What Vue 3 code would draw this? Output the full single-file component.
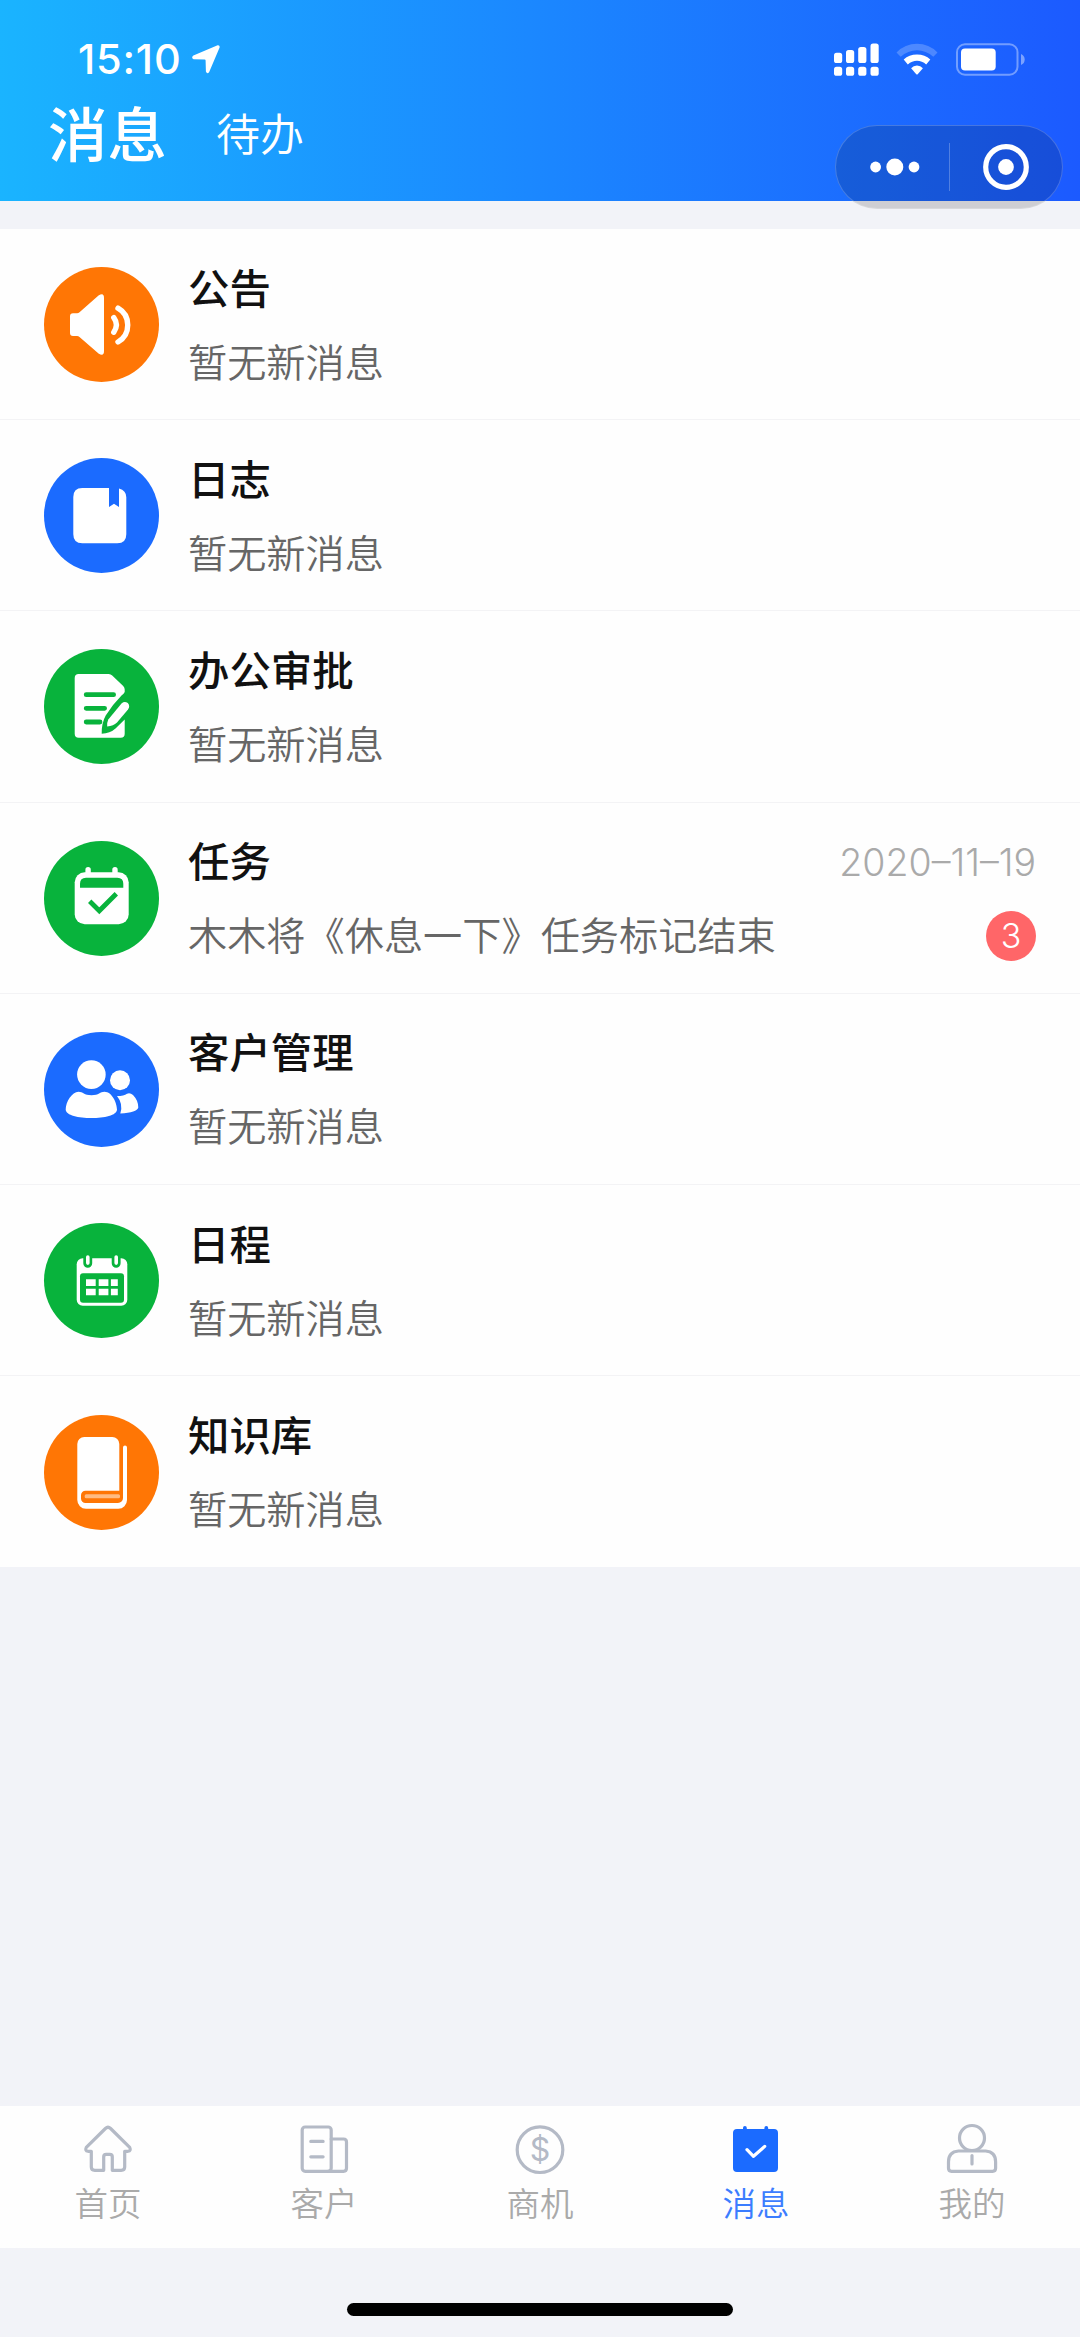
<template>
  <div class="page">
    <!-- Header -->
    <header class="header">
      <div class="status-bar">
        <div class="status-left">
          <span class="time">15:10</span>
          <svg class="icon-location" viewBox="0 0 28 29">
            <path d="M25.6.3 1.4 10.6Q-1.2 12.8 1.6 14.2L12.6 14.4Q13.6 14.5 13.6 15.5L13.9 26.5Q15.2 29.6 17.2 27L27.6 2.5Q28 0 25.6.3z" fill="#fff" />
          </svg>
        </div>
        <div class="status-right">
          <svg class="icon-signal" viewBox="0 0 45 33" fill="#fff">
            <rect x="0" y="9.7" width="8.2" height="10.3" rx="2.6" />
            <rect x="12" y="7" width="8.2" height="13" rx="2.6" />
            <rect x="24.2" y="4" width="8.2" height="16" rx="2.6" />
            <rect x="36.5" y="0.4" width="8.2" height="19.6" rx="2.6" />
            <rect v-for="x in [0, 12, 24.2, 36.5]" :key="x" :x="x" y="23.8" width="8.2" height="9" rx="2.6" />
          </svg>
          <svg class="icon-wifi" viewBox="0 0 42 33">
            <path d="M0.5 9.4Q9 .7 21 .7T41.5 9.4L37.3 13.7Q30 7.2 21 7.2T4.7 13.7z" fill="#fff" fill-opacity="0.22" />
            <path d="M7.7 16.6Q13 11.5 21 11.5T34.3 16.6L30.2 21.5Q26 17.8 21 17.8T11.8 21.5z" fill="#fff" />
            <path d="M15.1 25.2Q17.5 22.4 21 22.4T26.9 25.2L21.7 31.2Q21 31.8 20.3 31.2z" fill="#fff" />
          </svg>
          <svg class="icon-battery" viewBox="0 0 69 33">
            <rect x="1" y="1.3" width="60.5" height="30.4" rx="8" fill="none" stroke="#fff" stroke-opacity="0.38" stroke-width="2" />
            <rect x="5" y="5.5" width="34.7" height="22" rx="4" fill="#fff" />
            <path d="M65 11Q68.7 12.5 68.7 16.5T65 22z" fill="#fff" fill-opacity="0.42" />
          </svg>
        </div>
      </div>
      <nav class="top-tabs">
        <span class="top-tab active">消息</span>
        <span class="top-tab">待办</span>
      </nav>
    </header>

    <!-- Mini program capsule -->
    <div class="capsule">
      <div class="capsule-half">
        <svg class="icon-more" viewBox="0 0 50 18" fill="#fff">
          <circle cx="5.6" cy="9" r="5.4" />
          <circle cx="24.8" cy="9" r="8.5" />
          <circle cx="44" cy="9" r="5.4" />
        </svg>
      </div>
      <div class="capsule-line"></div>
      <div class="capsule-half">
        <svg class="icon-close" viewBox="0 0 46 46">
          <circle cx="23" cy="23" r="20.3" fill="none" stroke="#fff" stroke-width="5.2" />
          <circle cx="23" cy="23" r="7.9" fill="#fff" />
        </svg>
      </div>
    </div>

    <!-- Message list -->
    <main class="list">
      <div v-for="item in messages" :key="item.title" class="item">
        <div class="avatar" :class="item.color">
          <svg viewBox="0 0 115 115" fill="#fff">
            <g v-if="item.icon === 'notice'">
              <path d="M29 46.3h4q1.5 0 2.5-1L54.5 28.6Q60 25 60 31V84Q60 90 54.5 86.5L35.5 70q-1-1-2.5-1h-4q-3 0-3-3V49.3q0-3 3-3z" />
              <g fill="none" stroke="#fff" stroke-width="5.4" stroke-linecap="round">
                <path d="M69.8 50.7Q75 57.7 69.8 65.2" />
                <path d="M74 41.2C87 48.5 87 67.5 74 75" />
              </g>
            </g>
            <g v-else-if="item.icon === 'journal'">
              <path d="M38.3 30H65v19l5-3.3 5 3.3V30.5q7.3 2 7.3 8.8v37q0 9-9 9h-35q-9 0-9-9V39q0-9 9-9z" />
            </g>
            <g v-else-if="item.icon === 'approve'">
              <path d="M34.7 25h30q2 0 3.5 1.5l11 10.5q1.5 1.5 1.5 3.5v2.5Q80 44.5 77.5 46.5Q69 55 61.7 66.5Q57.5 74 57.7 84.8Q66 84.5 71.5 79.5L80.7 70.5V84.7q0 4-4 4h-42q-4 0-4-4V29q0-4 4-4z" />
              <path class="cut rounded" d="M42.2 45.7H69.6M42.2 59.3H60.6M42.2 73H56" />
              <path d="M64.3 70.5L77.5 54.5Q80.5 51.8 83.8 54Q86.5 57 84 60.5L73 73.5Q69.5 77 63.2 77.5Q63 73 64.3 70.5z" />
            </g>
            <g v-else-if="item.icon === 'task'">
              <rect x="30.7" y="31.3" width="54" height="52" rx="10" />
              <rect x="41.4" y="26" width="5.4" height="12" rx="2.7" />
              <rect x="68.3" y="26" width="5.4" height="12" rx="2.7" />
              <path d="M36 46.7V42.7q0-6 6-6H73.3q6 0 6 6v4z" fill="#08b33c" />
              <path class="cut" d="M45.7 60.3 55.3 69.8 72.3 52.7" />
            </g>
            <g v-else-if="item.icon === 'customer'">
              <circle cx="47.4" cy="42.6" r="14.3" />
              <circle cx="76" cy="48.3" r="10" />
              <path d="M34.5 59.7C39 59.7 40 63.2 47.5 63.2S56 59.7 60.5 59.7C68 59.7 73 71 73 77.5C73 83.5 60 86 47.5 86S21.7 83.5 21.7 77.5C21.7 70 28 59.7 34.5 59.7z" />
              <path d="M73 64Q80 64 83 61.7Q86 60.3 89 63Q94.3 68.5 94.3 75.5Q93 80.5 76.3 81.5Q79.5 72 73 64z" />
            </g>
            <g v-else-if="item.icon === 'schedule'">
              <rect x="32.7" y="35.3" width="50.6" height="47.4" rx="6" />
              <g fill="#08b33c">
                <rect x="36" y="50.3" width="44" height="29.4" rx="3" />
                <path d="M39.3 34.5H48.2V40.3a4.45 4.45 0 0 1-8.9 0zM67.7 34.5H76.6V40.3a4.45 4.45 0 0 1-8.9 0z" />
              </g>
              <rect x="42" y="32.3" width="3.6" height="9.6" rx="1.8" />
              <rect x="70.4" y="32.3" width="3.6" height="9.6" rx="1.8" />
              <path d="M42 56.2h9.7v6.7H42zM54.7 56.2h9.7v6.7h-9.7zM66.9 56.2h6.9v6.7h-6.9zM42 65.7h9.7v6.5H42zM54.7 65.7h9.7v6.5h-9.7zM66.9 65.7h6.9v6.5h-6.9z" />
            </g>
            <g v-else>
              <path d="M40.3 22H68.3a7 7 0 0 1 7 7V75.7H41.5a4.5 4.5 0 0 0-4.5 4.5v3.3a4.5 4.5 0 0 0 4.5 4.5H74a5 5 0 0 0 5-5V32.5a2 2 0 0 1 4 0V85a8.7 8.7 0 0 1-8.7 8.7H42a8.7 8.7 0 0 1-8.7-8.7V29a7 7 0 0 1 7-7z" />
              <rect x="40.7" y="79.3" width="35.3" height="4" rx="1.5" fill-opacity="0.5" />
            </g>
          </svg>
        </div>
        <div class="content">
          <div class="line">
            <span class="title">{{ item.title }}</span>
            <span v-if="item.date" class="date">{{ item.date }}</span>
          </div>
          <div class="line">
            <span class="desc">{{ item.desc }}</span>
            <span v-if="item.count" class="badge">{{ item.count }}</span>
          </div>
        </div>
      </div>
    </main>

    <!-- Tab bar -->
    <footer class="tab-bar">
      <div
        v-for="tab in tabs"
        :key="tab.label"
        class="tab"
        :class="{ active: tab.icon === activeTab }"
      >
        <svg class="tab-icon" viewBox="0 0 54 54">
          <path v-if="tab.icon === 'home'" d="M24.4 6.5q2.6-2.4 5.2 0L48.7 25.4q1.6 3.3-1.7 3.9h-3.3V45q0 3.3-3.5 3.3h-8.9V34.8q0-2.5-2.5-2.5h-3.6q-2.5 0-2.5 2.5v13.5h-8.9q-3.5 0-3.5-3.3V29.3H7q-3.3-.6-1.7-3.9z" />
          <g v-else-if="tab.icon === 'customer'">
            <rect x="5.2" y="5" width="29" height="44.3" rx="3" />
            <path d="M34.2 17H46.5q3 0 3 3V46.3q0 3-3 3H31M13.800 19.400H26.100M13.800 34.800H26.100" />
          </g>
          <g v-else-if="tab.icon === 'chance'">
            <circle cx="27" cy="27.7" r="22.8" />
            <text class="coin" x="27" y="39" text-anchor="middle">$</text>
          </g>
          <g v-else-if="tab.icon === 'message'">
            <path class="solid" d="M8 7H14V5.900q0-1.900 1.900-1.900T17.800 5.900V7H35.400V5.900q0-1.900 1.900-1.900T39.200 5.900V7H45q4 0 4 4V46q0 4-4 4H8q-4 0-4-4V11q0-4 4-4z" />
            <path class="check" d="M18 27.7 24.5 34.3 35.7 24.4" />
          </g>
          <g v-else>
            <circle cx="27" cy="16" r="12.5" />
            <path d="M13.5 29H40.600q10 .8 10 10.800V46.300q0 3-3 3H6.500q-3 0-3-3V39.800q0-10 10-10.800zM27 33.500V42" />
          </g>
        </svg>
        <span class="tab-label">{{ tab.label }}</span>
      </div>
    </footer>
    <div class="safe-area">
      <div class="home-indicator"></div>
    </div>
  </div>
</template>

<script setup>
import { ref } from 'vue'

const EMPTY = '暂无新消息'

const messages = ref([
  { icon: 'notice', color: 'orange', title: '公告', desc: EMPTY },
  { icon: 'journal', color: 'blue', title: '日志', desc: EMPTY },
  { icon: 'approve', color: 'green', title: '办公审批', desc: EMPTY },
  { icon: 'task', color: 'green', title: '任务', desc: '木木将《休息一下》任务标记结束', date: '2020–11–19', count: 3 },
  { icon: 'customer', color: 'blue', title: '客户管理', desc: EMPTY },
  { icon: 'schedule', color: 'green', title: '日程', desc: EMPTY },
  { icon: 'library', color: 'orange', title: '知识库', desc: EMPTY }
])

const activeTab = ref('message')

const tabs = [
  { icon: 'home', label: '首页' },
  { icon: 'customer', label: '客户' },
  { icon: 'chance', label: '商机' },
  { icon: 'message', label: '消息' },
  { icon: 'mine', label: '我的' }
]
</script>

<style>
body {
  background: #f2f3f8;
}
</style>

<style scoped>
.page {
  position: relative;
  display: flex;
  flex-direction: column;
  width: 1080px;
  height: 2337px;
  overflow: hidden;
  background: #f2f3f8;
  font-family: Inter, "Noto Sans CJK SC", sans-serif;
}

.page svg {
  display: block;
}

.header {
  flex: none;
  height: 201px;
  box-sizing: border-box;
  padding-top: 34px;
  background: linear-gradient(90deg, #1ab4ff 0%, #1c5aff 100%);
  color: #fff;
}

.status-bar {
  display: flex;
  justify-content: space-between;
  align-items: center;
  height: 50px;
  padding: 0 55px 0 78px;
}

.status-left,
.status-right {
  display: flex;
  align-items: center;
}

.status-left {
  gap: 11px;
}

.time {
  font-size: 41.5px;
  font-weight: 500;
  line-height: 50px;
  letter-spacing: 0.8px;
}

.icon-location {
  width: 28px;
  height: 29px;
}

.icon-signal {
  width: 45px;
  height: 33px;
}

.icon-wifi {
  width: 42px;
  height: 33px;
  margin: 0 18px 0 17px;
}

.icon-battery {
  width: 69px;
  height: 33px;
}

.top-tabs {
  display: flex;
  align-items: center;
  gap: 49px;
  height: 96px;
  padding: 3px 0 0 48px;
}

.top-tab {
  font-size: 44px;
  line-height: 96px;
  font-weight: 350;
}

.top-tab.active {
  font-size: 59.5px;
  font-weight: 500;
}

/* floats over the lower edge of the header */
.capsule {
  position: absolute;
  top: 125px;
  right: 17px;
  display: flex;
  align-items: center;
  width: 228px;
  height: 84px;
  box-sizing: border-box;
  border: 1px solid rgba(255, 255, 255, 0.2);
  border-radius: 42px;
  background: rgba(0, 0, 0, 0.15);
}

.capsule-half {
  flex: 1;
  display: flex;
  justify-content: center;
}

.capsule-line {
  width: 1px;
  height: 48px;
  background: rgba(255, 255, 255, 0.25);
}

.icon-more {
  width: 50px;
  height: 18px;
  margin-left: 6px;
}

.icon-close {
  width: 46px;
  height: 46px;
}

.list {
  flex: none;
  margin-top: 28px;
  background: #fefefe;
}

.item {
  display: flex;
  align-items: center;
  height: 191.2px;
  box-sizing: border-box;
  padding: 1px 44px 0;
  border-bottom: 1px solid #f3f3f5;
}

.item:last-child {
  border-bottom: none;
}

.avatar {
  flex: none;
  width: 115px;
  height: 115px;
  border-radius: 50%;
}

.avatar.orange {
  background: #ff7605;
}

.avatar.blue {
  background: #1b6bff;
}

.avatar.green {
  background: #08b33c;
}

.cut {
  fill: none;
  stroke: #08b33c;
  stroke-width: 4.8;
}

.cut.rounded {
  stroke-linecap: round;
}

.content {
  flex: 1;
  display: flex;
  flex-direction: column;
  gap: 20px;
  margin-left: 29px;
  padding-top: 2px;
}

.line {
  display: flex;
  justify-content: space-between;
  align-items: center;
  height: 54px;
}

.title {
  font-size: 41.4px;
  font-weight: 500;
  line-height: 54px;
  color: #111;
}

.desc {
  font-size: 39.2px;
  font-weight: 350;
  line-height: 54px;
  color: #666;
}

.date {
  font-size: 37.5px;
  font-weight: 350;
  color: #aaa;
}

.badge {
  width: 50px;
  height: 50px;
  border-radius: 50%;
  background: #ff6668;
  color: #fff;
  font-size: 34px;
  font-weight: 350;
  line-height: 50px;
  text-align: center;
}

.tab-bar {
  flex: none;
  display: flex;
  height: 142px;
  margin-top: auto;
  background: #fefefe;
}

.tab {
  flex: 1;
  display: flex;
  flex-direction: column;
  align-items: center;
  padding-top: 16px;
  color: #aaa;
}

.tab-icon {
  width: 54px;
  height: 54px;
  fill: none;
  stroke: #b4bac6;
  stroke-width: 3.2;
  stroke-linecap: round;
  stroke-linejoin: round;
}

.tab-icon .solid {
  fill: #1b6bff;
  stroke: none;
}

.tab-icon .check {
  stroke: #fff;
}

.coin {
  font-size: 32px;
  fill: #b4bac6;
  stroke: none;
}

.tab-label {
  font-size: 33.5px;
  font-weight: 350;
  line-height: 48px;
  margin-top: 4px;
}

.tab.active .tab-label {
  color: #3c7dff;
}

.safe-area {
  flex: none;
  display: flex;
  justify-content: center;
  align-items: flex-end;
  height: 89px;
  box-sizing: border-box;
  padding-bottom: 21px;
}

.home-indicator {
  width: 386px;
  height: 13px;
  border-radius: 7px;
  background: #000;
}
</style>
